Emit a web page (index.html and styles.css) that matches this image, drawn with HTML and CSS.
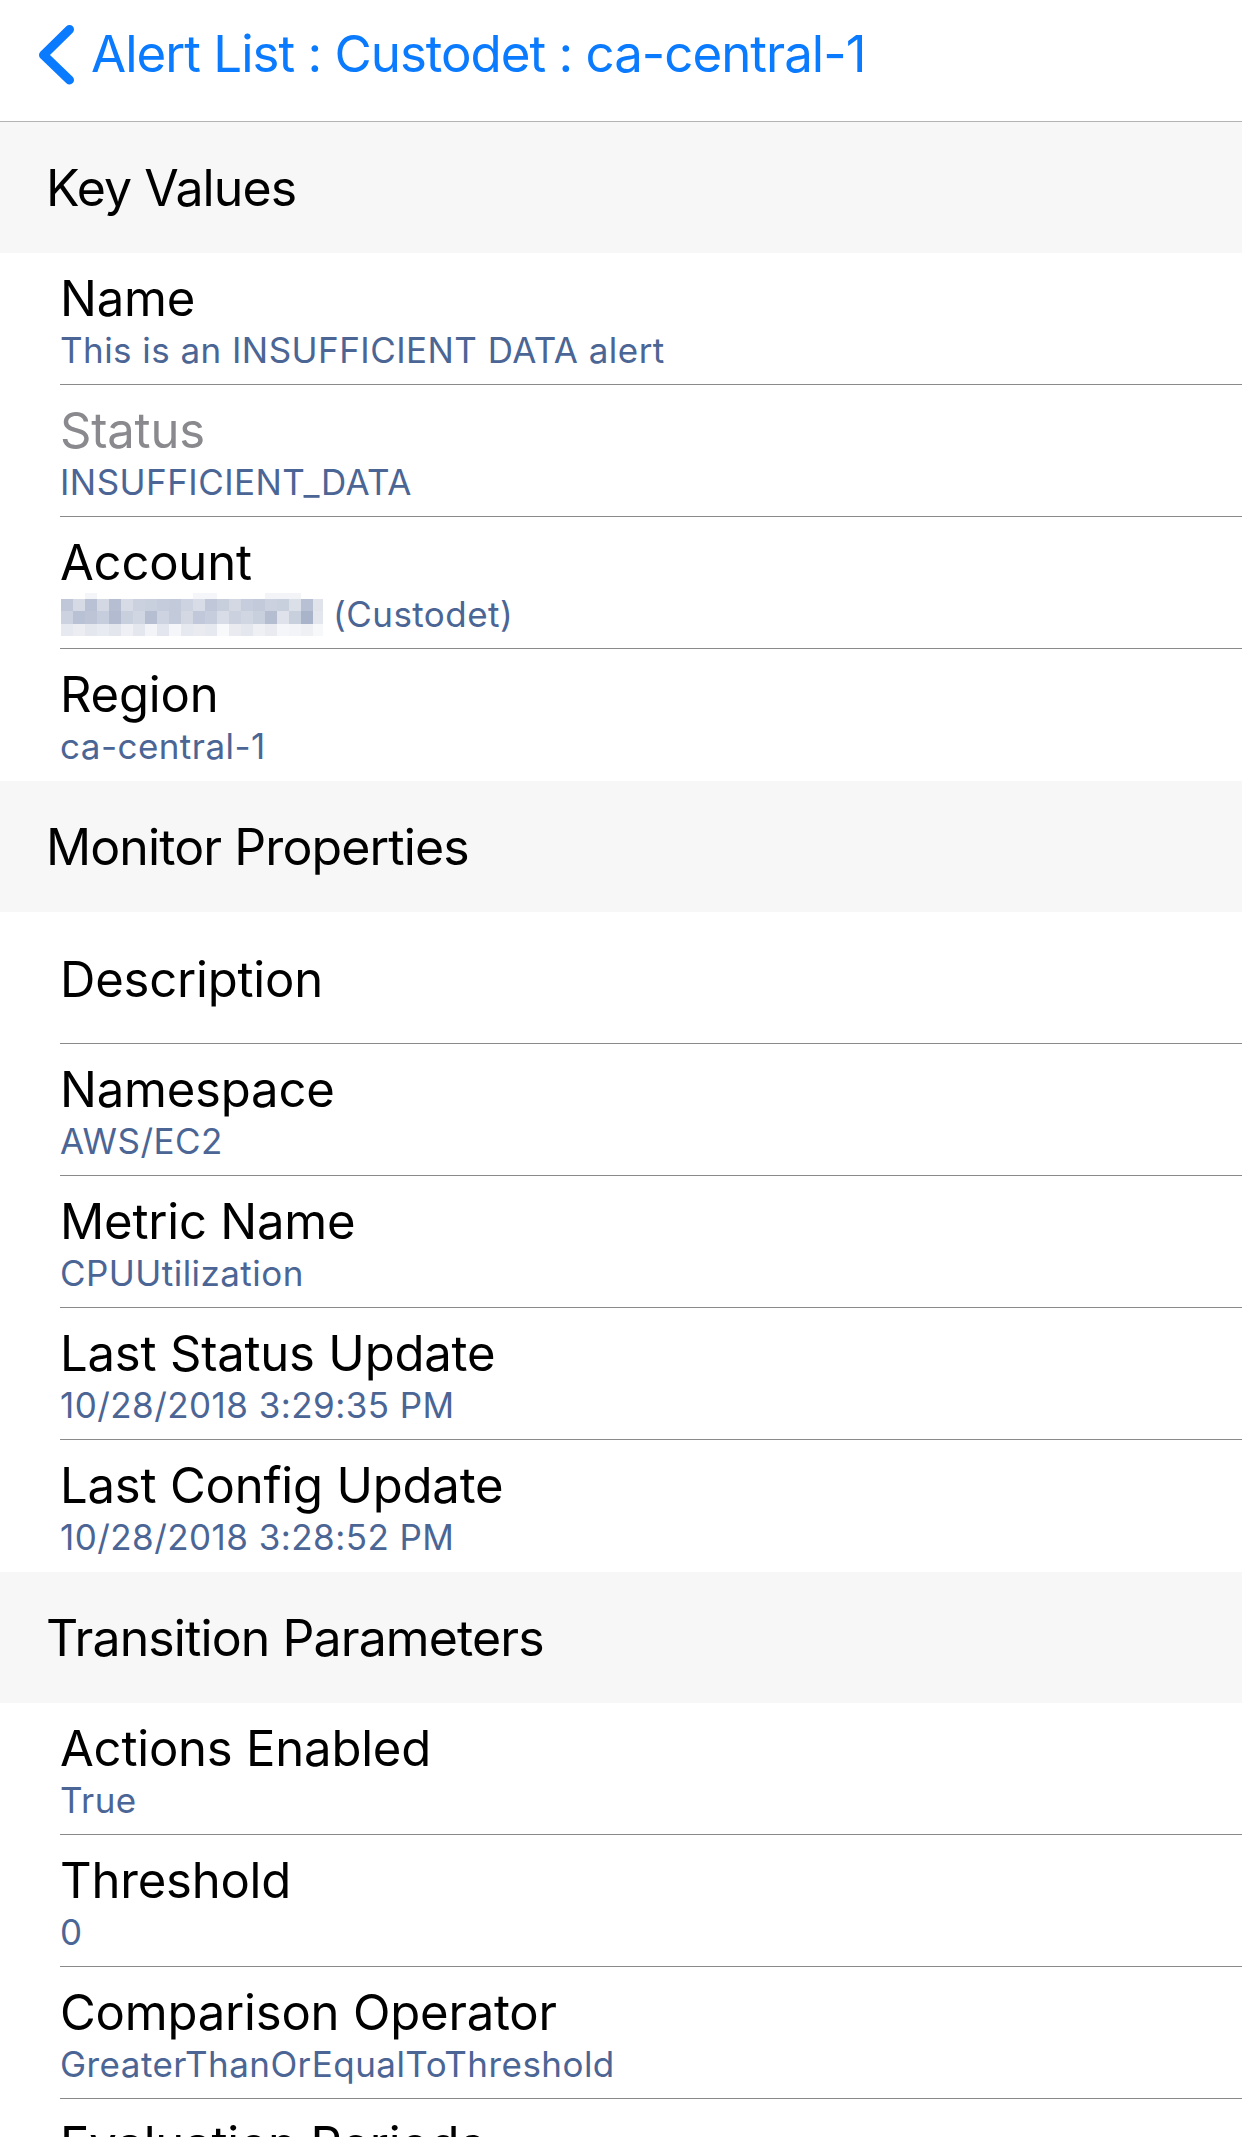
FILE: index.html
```html
<!DOCTYPE html>
<html lang="en">
<head>
<meta charset="utf-8">
<title>Alert Detail</title>
<link rel="stylesheet" href="styles.css">
</head>
<body>
<header class="nav">
  <a class="back" href="#">
    <svg class="chevron" width="40" height="64" viewBox="0 0 40 64" aria-hidden="true">
      <polyline points="32.5,6.5 6.5,32 32.5,57" fill="none" stroke="#0a7aff" stroke-width="9" stroke-linecap="round" stroke-linejoin="round"/>
    </svg>
    <span class="back-title">Alert List : Custodet : ca-central-1</span>
  </a>
</header>
<main class="table">
  <section class="group">
    <h2 class="group-title">Key Values</h2>
    <ul class="cells">
      <li class="cell"><div class="cell-body"><div class="cell-label">Name</div><div class="cell-value">This is an INSUFFICIENT DATA alert</div></div></li>
      <li class="cell"><div class="cell-body"><div class="cell-label muted">Status</div><div class="cell-value">INSUFFICIENT_DATA</div></div></li>
      <li class="cell"><div class="cell-body"><div class="cell-label">Account</div><div class="cell-value account">
        <svg class="redacted" width="264" height="44" viewBox="0 0 264 44" aria-hidden="true">
          <g>
            <rect x="24" y="0" width="12" height="6" fill="#f4f5f8"/><rect x="132" y="0" width="24" height="6" fill="#f5f6f9"/><rect x="204" y="0" width="36" height="6" fill="#f3f4f7"/>
          </g>
          <g>
            <rect x="0" y="6" width="12" height="12" fill="#c0c7d8"/><rect x="12" y="6" width="12" height="12" fill="#d5dae5"/><rect x="24" y="6" width="12" height="12" fill="#b9c1d4"/><rect x="36" y="6" width="12" height="12" fill="#d3d8e3"/><rect x="48" y="6" width="12" height="12" fill="#b6bed2"/><rect x="60" y="6" width="12" height="12" fill="#d6dbe6"/><rect x="72" y="6" width="12" height="12" fill="#cbd1df"/><rect x="84" y="6" width="12" height="12" fill="#c8cfdd"/><rect x="96" y="6" width="12" height="12" fill="#c5ccdb"/><rect x="108" y="6" width="12" height="12" fill="#c3cada"/><rect x="120" y="6" width="12" height="12" fill="#cdd3e0"/><rect x="132" y="6" width="12" height="12" fill="#d8dce6"/><rect x="144" y="6" width="12" height="12" fill="#bfc7d8"/><rect x="156" y="6" width="12" height="12" fill="#c7cedc"/><rect x="168" y="6" width="12" height="12" fill="#d3d8e3"/><rect x="180" y="6" width="12" height="12" fill="#c6cddc"/><rect x="192" y="6" width="12" height="12" fill="#c3cad9"/><rect x="204" y="6" width="12" height="12" fill="#cbd1df"/><rect x="216" y="6" width="12" height="12" fill="#c8cfdd"/><rect x="228" y="6" width="12" height="12" fill="#dadfe8"/><rect x="240" y="6" width="12" height="12" fill="#b8c0d4"/><rect x="252" y="6" width="10" height="12" fill="#e0e3ea"/>
          </g>
          <g>
            <rect x="0" y="18" width="12" height="13" fill="#ccd2e0"/><rect x="12" y="18" width="12" height="13" fill="#b9c1d4"/><rect x="24" y="18" width="12" height="13" fill="#bcc4d6"/><rect x="36" y="18" width="12" height="13" fill="#c6cddc"/><rect x="48" y="18" width="12" height="13" fill="#b2bbcf"/><rect x="60" y="18" width="12" height="13" fill="#c8cfdd"/><rect x="72" y="18" width="12" height="13" fill="#d0d6e2"/><rect x="84" y="18" width="12" height="13" fill="#b6bed2"/><rect x="96" y="18" width="12" height="13" fill="#cdd3e0"/><rect x="108" y="18" width="12" height="13" fill="#c3cada"/><rect x="120" y="18" width="12" height="13" fill="#d3d8e3"/><rect x="132" y="18" width="12" height="13" fill="#c1c8d9"/><rect x="144" y="18" width="12" height="13" fill="#c6cddc"/><rect x="156" y="18" width="12" height="13" fill="#d8dce6"/><rect x="168" y="18" width="12" height="13" fill="#cbd1df"/><rect x="180" y="18" width="12" height="13" fill="#d0d6e2"/><rect x="192" y="18" width="12" height="13" fill="#c8cfdd"/><rect x="204" y="18" width="12" height="13" fill="#b5bdd1"/><rect x="216" y="18" width="12" height="13" fill="#dfe2ea"/><rect x="228" y="18" width="12" height="13" fill="#c8cfdd"/><rect x="240" y="18" width="12" height="13" fill="#a9b4cb"/><rect x="252" y="18" width="10" height="13" fill="#e3e6ed"/>
          </g>
          <g>
            <rect x="0" y="31" width="12" height="12" fill="#e6e9f0"/><rect x="12" y="31" width="12" height="12" fill="#ebedf3"/><rect x="24" y="31" width="12" height="12" fill="#e4e7ee"/><rect x="36" y="31" width="12" height="12" fill="#e8ebf1"/><rect x="48" y="31" width="12" height="12" fill="#e3e6ed"/><rect x="60" y="31" width="12" height="12" fill="#eef0f5"/><rect x="72" y="31" width="12" height="12" fill="#e4e7ee"/><rect x="84" y="31" width="12" height="12" fill="#f3f4f8"/><rect x="96" y="31" width="12" height="12" fill="#e3e6ee"/><rect x="108" y="31" width="12" height="12" fill="#f5f6f9"/><rect x="120" y="31" width="12" height="12" fill="#e6e9f0"/><rect x="132" y="31" width="12" height="12" fill="#e9ebf1"/><rect x="144" y="31" width="12" height="12" fill="#e6e9f0"/><rect x="156" y="31" width="12" height="12" fill="#f8f9fb"/><rect x="168" y="31" width="12" height="12" fill="#e9ebf1"/><rect x="180" y="31" width="12" height="12" fill="#e4e7ee"/><rect x="192" y="31" width="12" height="12" fill="#eef0f4"/><rect x="204" y="31" width="12" height="12" fill="#e9ebf1"/><rect x="216" y="31" width="12" height="12" fill="#f5f6f9"/><rect x="228" y="31" width="12" height="12" fill="#f3f4f7"/><rect x="240" y="31" width="12" height="12" fill="#eef0f4"/><rect x="252" y="31" width="10" height="12" fill="#f7f8fa"/>
          </g>
        </svg>
        <span>(Custodet)</span></div></div></li>
      <li class="cell"><div class="cell-body"><div class="cell-label">Region</div><div class="cell-value">ca-central-1</div></div></li>
    </ul>
  </section>
  <section class="group">
    <h2 class="group-title">Monitor Properties</h2>
    <ul class="cells">
      <li class="cell"><div class="cell-body single"><div class="cell-label">Description</div></div></li>
      <li class="cell"><div class="cell-body"><div class="cell-label">Namespace</div><div class="cell-value">AWS/EC2</div></div></li>
      <li class="cell"><div class="cell-body"><div class="cell-label">Metric Name</div><div class="cell-value">CPUUtilization</div></div></li>
      <li class="cell"><div class="cell-body"><div class="cell-label">Last Status Update</div><div class="cell-value">10/28/2018 3:29:35 PM</div></div></li>
      <li class="cell"><div class="cell-body"><div class="cell-label">Last Config Update</div><div class="cell-value">10/28/2018 3:28:52 PM</div></div></li>
    </ul>
  </section>
  <section class="group">
    <h2 class="group-title">Transition Parameters</h2>
    <ul class="cells">
      <li class="cell"><div class="cell-body"><div class="cell-label">Actions Enabled</div><div class="cell-value">True</div></div></li>
      <li class="cell"><div class="cell-body"><div class="cell-label">Threshold</div><div class="cell-value">0</div></div></li>
      <li class="cell"><div class="cell-body"><div class="cell-label">Comparison Operator</div><div class="cell-value">GreaterThanOrEqualToThreshold</div></div></li>
      <li class="cell"><div class="cell-body"><div class="cell-label">Evaluation Periods</div><div class="cell-value">1</div></div></li>
    </ul>
  </section>
</main>
</body>
</html>
```

FILE: styles.css
```css
* { box-sizing: border-box; }

html, body {
  margin: 0;
  padding: 0;
  background: #ffffff;
}

body {
  font-family: Inter, "Noto Sans", "Liberation Sans", sans-serif;
  color: #000000;
  width: 1242px;
  overflow: hidden;
}

.nav {
  height: 122px;
  border-bottom: 1px solid #b4b4b4;
  background: #ffffff;
  display: flex;
  align-items: flex-start;
}

.back {
  display: flex;
  align-items: flex-start;
  text-decoration: none;
  color: #0a7aff;
  padding-left: 37px;
  padding-top: 23px;
}

.chevron {
  display: block;
  flex: none;
}

.back-title {
  font-size: 51px;
  line-height: 62px;
  margin-left: 14px;
  white-space: nowrap;
  letter-spacing: -1px;
}

.table {
  display: flex;
  flex-direction: column;
}

.group {
  display: flex;
  flex-direction: column;
}

.group-title {
  margin: 0;
  height: 131px;
  background: #f7f7f7;
  display: flex;
  align-items: center;
  padding-left: 46px;
  font-size: 50px;
  font-weight: 400;
  letter-spacing: -0.9px;
}

.cells {
  list-style: none;
  margin: 0;
  padding: 0;
}

.cell {
  height: 132px;
  padding-left: 60px;
  background: #ffffff;
}

.cell-body {
  height: 100%;
  border-bottom: 1px solid #8a8a8a;
  padding-top: 18px;
  display: flex;
  flex-direction: column;
}

.cell:last-child .cell-body {
  border-bottom: none;
}

.cell-body.single {
  justify-content: center;
  padding-top: 4px;
}

.cell-label {
  font-size: 49px;
  line-height: 56px;
  color: #000000;
  white-space: nowrap;
  letter-spacing: -0.2px;
}

.cell-label.muted {
  color: #8a8a8e;
}

.cell-value {
  font-size: 35px;
  line-height: 46px;
  color: #4b6595;
  white-space: nowrap;
  letter-spacing: 0.45px;
}

.cell-value.account {
  display: flex;
  align-items: center;
  gap: 8px;
}

.redacted {
  display: block;
  flex: none;
  margin-top: 2px;
  margin-left: 1px;
}
```
